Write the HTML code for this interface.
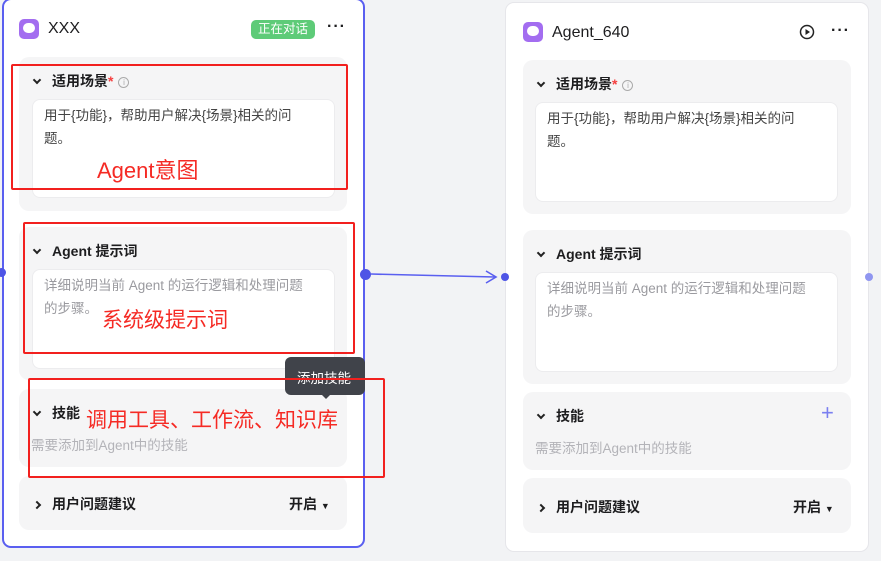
<!DOCTYPE html>
<html><head><meta charset="utf-8"><style>
*{margin:0;padding:0;box-sizing:border-box}
body{width:881px;height:561px;overflow:hidden;background:#f2f3f5;position:relative;font-family:"Liberation Sans","Noto Sans CJK SC",sans-serif;color:#1d1d1f}
.a{position:absolute}
.card{background:#fff;border-radius:9px}
.sec{background:#f5f5f6;border-radius:10px}
.ta{background:#fff;border-radius:8px;border:1px solid #ececee;font-size:13.5px;line-height:23px;padding:4px 11px;color:#444;white-space:nowrap}
.ta.g{color:#9a9a9f}
.h{font-size:14px;font-weight:bold;color:#1d1d1f;white-space:nowrap}
.chev{display:inline-block;width:6px;height:6px;border-right:2px solid #222;border-bottom:2px solid #222;transform:rotate(45deg);margin-right:12px;position:relative;top:-3px}
.chevr{display:inline-block;width:6px;height:6px;border-right:2px solid #222;border-bottom:2px solid #222;transform:rotate(-45deg);margin-right:12px;position:relative;top:-1px}
.red{border:2px solid #f2201e;border-radius:2px}
.rt{color:#f52a24;font-size:21px;white-space:nowrap}
.icon{width:20px;height:20px;background:#a36df0;border-radius:5px}
.icon:after{content:"";position:absolute;left:4px;top:4px;width:12px;height:10px;background:#fff;border-radius:6px}
.dots{font-size:16px;font-weight:bold;letter-spacing:1px}
.dot{width:9px;height:9px;border-radius:50%;background:#4e55e6}
.star{color:#f53f3f}
.info{display:inline-block;width:11px;height:11px;border:1px solid #aaa;border-radius:50%;font-size:8px;line-height:9px;text-align:center;color:#aaa;font-weight:normal;margin-left:5px;vertical-align:1px}
</style></head><body>
<div class="a card" style="left:2px;top:-2px;width:363px;height:550px;border:2px solid #5a5ff0"></div>
<div class="a icon" style="left:19px;top:19px"></div>
<div class="a" style="left:48px;top:20px;font-size:16px">XXX</div>
<div class="a" style="left:251px;top:20px;width:64px;height:19px;background:#5ecb78;border-radius:5px;color:#fff;font-size:12.5px;line-height:19px;text-align:center">正在对话</div>
<div class="a dots" style="left:327px;top:18px">···</div>

<div class="a sec" style="left:19px;top:57px;width:328px;height:154px"></div>
<div class="a h" style="left:34px;top:71px"><span class="chev"></span>适用场景<span class="star">*</span><span class="info">i</span></div>
<div class="a ta" style="left:32px;top:99px;width:303px;height:99px">用于{功能}，帮助用户解决{场景}相关的问<br>题。</div>

<div class="a sec" style="left:19px;top:227px;width:328px;height:153px"></div>
<div class="a h" style="left:34px;top:241px"><span class="chev"></span>Agent 提示词</div>
<div class="a ta g" style="left:32px;top:269px;width:303px;height:100px">详细说明当前 Agent 的运行逻辑和处理问题<br>的步骤。</div>

<div class="a sec" style="left:19px;top:389px;width:328px;height:78px"></div>
<div class="a h" style="left:34px;top:403px"><span class="chev"></span>技能</div>
<div class="a" style="left:31px;top:434px;font-size:13.5px;color:#b3b3b8">需要添加到Agent中的技能</div>

<div class="a sec" style="left:19px;top:476px;width:328px;height:54px"></div>
<div class="a h" style="left:34px;top:494px"><span class="chevr"></span>用户问题建议</div>
<div class="a h" style="left:289px;top:494px">开启 <span style="font-size:9px">▼</span></div>

<div class="a" style="left:285px;top:357px;width:80px;height:38px;background:#40434a;border-radius:6px"></div>
<div class="a" style="left:320px;top:393px;width:0;height:0;border-left:6px solid transparent;border-right:6px solid transparent;border-top:6px solid #40434a"></div>
<div class="a" style="left:297px;top:367px;color:#fff;font-size:13.5px">添加技能</div>

<div class="a red" style="left:11px;top:64px;width:337px;height:126px"></div>
<div class="a rt" style="left:97px;top:153px;font-size:22px">Agent意图</div>
<div class="a red" style="left:23px;top:222px;width:332px;height:132px"></div>
<div class="a rt" style="left:102px;top:304px">系统级提示词</div>
<div class="a red" style="left:28px;top:378px;width:357px;height:100px"></div>
<div class="a rt" style="left:86px;top:404px">调用工具、工作流、知识库</div>

<div class="a dot" style="left:-3px;top:268px"></div>
<div class="a dot" style="left:360px;top:269px;width:11px;height:11px"></div>
<svg class="a" style="left:0;top:0" width="881" height="561"><path d="M371 274 L495 277" stroke="#5a5ff0" stroke-width="1.6" fill="none"/><path d="M486 271 L496 277 L486 283" stroke="#5a5ff0" stroke-width="1.6" fill="none"/></svg>

<div class="a card" style="left:505px;top:2px;width:364px;height:550px;border:1px solid #e6e6ea"></div>
<div class="a dot" style="left:501px;top:273px;width:8px;height:8px"></div>
<div class="a dot" style="left:865px;top:273px;width:8px;height:8px;background:#9096f0"></div>
<div class="a icon" style="left:523px;top:22px"></div>
<div class="a" style="left:552px;top:24px;font-size:16px">Agent_640</div>
<svg class="a" style="left:799px;top:24px" width="16" height="16"><circle cx="8" cy="8" r="6.5" stroke="#222" stroke-width="1.5" fill="none"/><path d="M6.5 5 L11 8 L6.5 11Z" fill="#222"/></svg>
<div class="a dots" style="left:831px;top:22px">···</div>

<div class="a sec" style="left:523px;top:60px;width:328px;height:154px"></div>
<div class="a h" style="left:538px;top:74px"><span class="chev"></span>适用场景<span class="star">*</span><span class="info">i</span></div>
<div class="a ta" style="left:535px;top:102px;width:303px;height:100px">用于{功能}，帮助用户解决{场景}相关的问<br>题。</div>

<div class="a sec" style="left:523px;top:230px;width:328px;height:154px"></div>
<div class="a h" style="left:538px;top:244px"><span class="chev"></span>Agent 提示词</div>
<div class="a ta g" style="left:535px;top:272px;width:303px;height:100px">详细说明当前 Agent 的运行逻辑和处理问题<br>的步骤。</div>

<div class="a sec" style="left:523px;top:392px;width:328px;height:78px"></div>
<div class="a h" style="left:538px;top:406px"><span class="chev"></span>技能</div>
<div class="a" style="left:821px;top:403px;color:#7a7ff0;font-size:22px;line-height:20px">+</div>
<div class="a" style="left:535px;top:437px;font-size:13.5px;color:#b3b3b8">需要添加到Agent中的技能</div>

<div class="a sec" style="left:523px;top:478px;width:328px;height:55px"></div>
<div class="a h" style="left:538px;top:497px"><span class="chevr"></span>用户问题建议</div>
<div class="a h" style="left:793px;top:497px">开启 <span style="font-size:9px">▼</span></div>
</body></html>
